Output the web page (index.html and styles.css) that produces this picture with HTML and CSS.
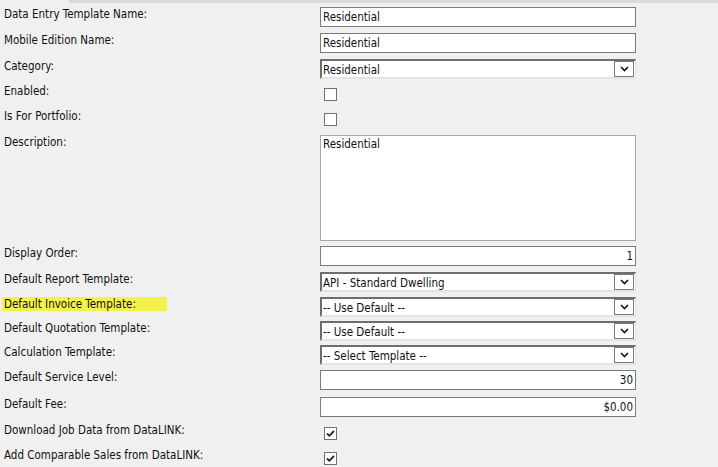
FILE: index.html
```html
<!DOCTYPE HTML>
<html>
  <head>
    <meta http-equiv="content-type" content="text/html; charset=utf-8">
    <title>Data Entry Template</title>
    <link rel="stylesheet" href="styles.css">
  </head>
  <body>
    <div class="topbar"></div>
    <div class="form">
      <div class="lbl">Data Entry Template Name:</div>
      <div><input class="txt" type="text" value="Residential"></div>

      <div class="lbl">Mobile Edition Name:</div>
      <div><input class="txt" type="text" value="Residential"></div>

      <div class="lbl">Category:</div>
      <div class="dd"><span class="val">Residential</span><span class="btn"><svg width="9" height="6" viewBox="0 0 9 6"><path d="M1 1l3.5 3.5L8 1" fill="none" stroke="#111" stroke-width="1.6"/></svg></span></div>

      <div class="lbl">Enabled:</div>
      <div><span class="cb"></span></div>

      <div class="lbl">Is For Portfolio:</div>
      <div><span class="cb"></span></div>

      <div class="lbl">Description:</div>
      <div><textarea class="area">Residential</textarea></div>

      <div class="lbl">Display Order:</div>
      <div><input class="txt num" type="text" value="1"></div>

      <div class="lbl">Default Report Template:</div>
      <div class="dd"><span class="val">API - Standard Dwelling</span><span class="btn"><svg width="9" height="6" viewBox="0 0 9 6"><path d="M1 1l3.5 3.5L8 1" fill="none" stroke="#111" stroke-width="1.6"/></svg></span></div>

      <div class="lbl"><span class="hl">Default Invoice Template:</span></div>
      <div class="dd"><span class="val">-- Use Default --</span><span class="btn"><svg width="9" height="6" viewBox="0 0 9 6"><path d="M1 1l3.5 3.5L8 1" fill="none" stroke="#111" stroke-width="1.6"/></svg></span></div>

      <div class="lbl">Default Quotation Template:</div>
      <div class="dd"><span class="val">-- Use Default --</span><span class="btn"><svg width="9" height="6" viewBox="0 0 9 6"><path d="M1 1l3.5 3.5L8 1" fill="none" stroke="#111" stroke-width="1.6"/></svg></span></div>

      <div class="lbl">Calculation Template:</div>
      <div class="dd"><span class="val">-- Select Template --</span><span class="btn"><svg width="9" height="6" viewBox="0 0 9 6"><path d="M1 1l3.5 3.5L8 1" fill="none" stroke="#111" stroke-width="1.6"/></svg></span></div>

      <div class="lbl">Default Service Level:</div>
      <div><input class="txt num" type="text" value="30"></div>

      <div class="lbl">Default Fee:</div>
      <div><input class="txt num" type="text" value="$0.00"></div>

      <div class="lbl">Download Job Data from DataLINK:</div>
      <div><span class="cb"><svg width="11" height="11" viewBox="0 0 11 11"><path d="M2 5.5l2.3 2.3L9 3" fill="none" stroke="#222" stroke-width="1.8"/></svg></span></div>

      <div class="lbl">Add Comparable Sales from DataLINK:</div>
      <div><span class="cb"><svg width="11" height="11" viewBox="0 0 11 11"><path d="M2 5.5l2.3 2.3L9 3" fill="none" stroke="#222" stroke-width="1.8"/></svg></span></div>
    </div>
  </body>
</html>
```

FILE: styles.css
```css
body{margin:0; padding:0; background:#f0f0f0; color:#111; font-family:"DejaVu Sans Condensed","DejaVu Sans",sans-serif; font-size:11.5px;}
.topbar{margin-left:69px; height:3px; background:#dadada;}
.form{display:grid; grid-template-columns:316px 316px; grid-template-rows:26px 26px 25px 25px 26px 111px 26px 25px 24px 24px 25px 27px 26px 25px 20px; padding:4px 0 0 4px;}
.lbl{line-height:13px; padding-top:1px;}
.hl{display:inline-block; background:#f4f04c; line-height:14px; margin:-1px 0 0 -2px; padding-left:2px; width:163px; vertical-align:top;}
.txt{box-sizing:border-box; width:316px; height:20px; margin:0; padding:0 2px; border:1px solid #7a7a7a; background:#fff; font:inherit; color:#111;}
.num{text-align:right;}
.area{box-sizing:border-box; display:block; width:316px; height:106px; margin:0; padding:1px 2px; border:1px solid #a8a8a8; background:#fff; font:inherit; color:#111; resize:none;}
.dd{box-sizing:border-box; display:flex; align-items:center; width:316px; height:20px; padding-top:1px; background:#fff; border-top:2px solid #6e6e6e; border-left:2px solid #6e6e6e; border-right:1px solid #e3e3e3; border-bottom:2px solid #e3e3e3;}
.dd .val{flex:1; padding-left:1px;}
.dd .btn{box-sizing:border-box; display:flex; align-items:center; justify-content:center; width:20px; height:16px; margin:-1px 1px 0 0; border:1px solid #7a7a7a; background:#fff;}
.cb{box-sizing:border-box; display:flex; align-items:center; justify-content:center; width:13px; height:13px; margin:4px 0 0 4px; border:1px solid #707070; background:#fff;}
```
